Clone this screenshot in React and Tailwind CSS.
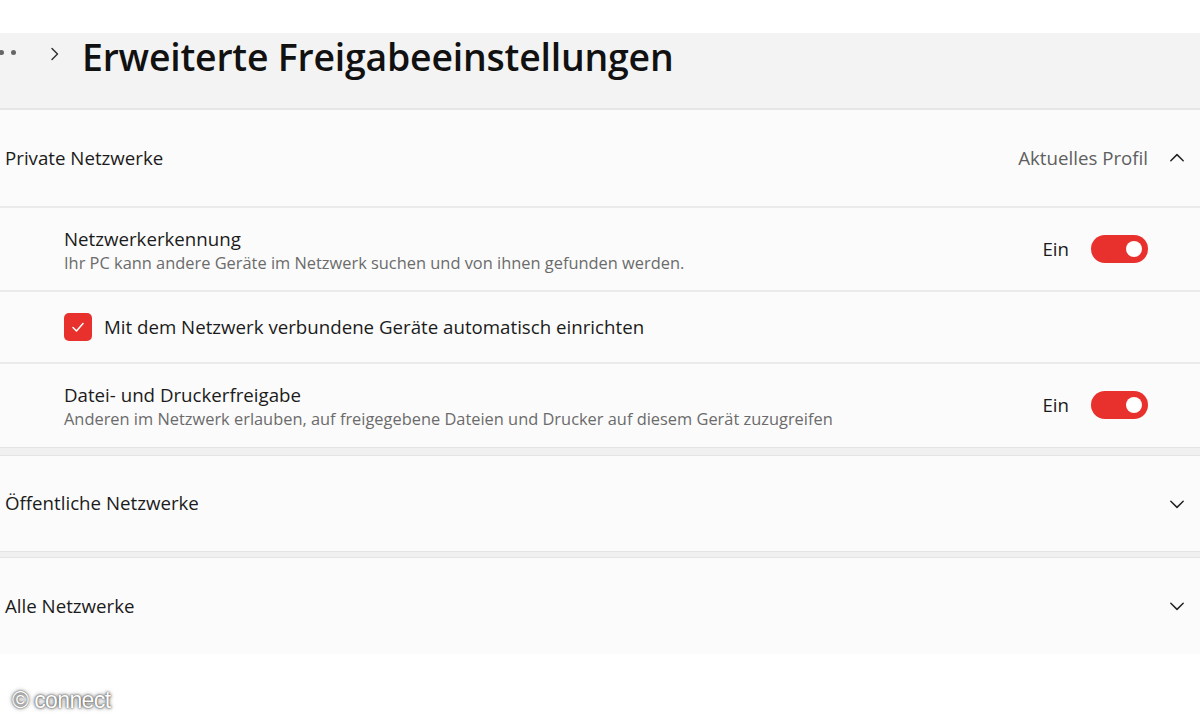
import React from "react";

const font = { fontFamily: '"Open Sans", "Noto Sans", sans-serif' };

function Chevron({ up }) {
  return (
    <svg width="18" height="18" viewBox="0 0 16 16" className="text-[#222]">
      <path
        d={up ? "M2.5 10.5 8 5l5.5 5.5" : "M2.5 5.5 8 11l5.5-5.5"}
        fill="none"
        stroke="currentColor"
        strokeWidth="1.3"
        strokeLinecap="round"
        strokeLinejoin="round"
      />
    </svg>
  );
}

function Toggle() {
  return (
    <div className="w-[57px] h-[28px] rounded-full bg-[#e8302d] flex items-center justify-end pr-[6px]">
      <div className="w-[16px] h-[16px] rounded-full bg-white" />
    </div>
  );
}

function Section({ title, right, open, children, height = "h-[96px]" }) {
  return (
    <div className="bg-[#fbfbfb]">
      <div className={`flex items-center ${height} pl-[5px] pr-[14px]`}>
        <span className="text-[18.7px] text-[#1b1b1b]">{title}</span>
        <div className="ml-auto flex items-center gap-[20px]">
          {right && <span className="text-[18.7px] text-[#5f5f5f]">{right}</span>}
          <Chevron up={open} />
        </div>
      </div>
      {children}
    </div>
  );
}

function SettingRow({ title, desc, height = "h-[84px]" }) {
  return (
    <div className={`flex items-center ${height} pl-[64px] pr-[52px] border-t-2 border-[#ebebeb]`}>
      <div className="flex flex-col pt-[2px]">
        <span className="text-[18.7px] leading-[24px] text-[#1b1b1b]">{title}</span>
        <span className="text-[16.4px] leading-[23px] text-[#6b6b6b]">{desc}</span>
      </div>
      <div className="ml-auto flex items-center gap-[22px]">
        <span className="text-[18.7px] text-[#1b1b1b]">Ein</span>
        <Toggle />
      </div>
    </div>
  );
}

export default function App() {
  return (
    <div className="w-[1200px] h-[720px] bg-white relative overflow-hidden" style={font}>
      <div className="h-[33px]" />
      <div className="h-[75px] bg-[#f3f3f3] flex items-start pt-[2px]">
        <div className="flex items-center gap-[7px] mt-[15px] -ml-[1px]">
          <div className="w-[5px] h-[5px] rounded-full bg-[#666]" />
          <div className="w-[5px] h-[5px] rounded-full bg-[#666]" />
        </div>
        <svg width="14" height="18" viewBox="0 0 14 18" className="ml-[32px] mt-[10px] text-[#333]">
          <path d="M4 3.5 9.5 9 4 14.5" fill="none" stroke="currentColor" strokeWidth="1.5" strokeLinecap="round" strokeLinejoin="round" />
        </svg>
        <h1 className="ml-[20px] text-[37.4px] leading-[44px] font-semibold text-[#111] tracking-[-0.2px]">
          Erweiterte Freigabeeinstellungen
        </h1>
      </div>
      <div className="border-t-2 border-[#e6e6e6]">
        <Section title="Private Netzwerke" right="Aktuelles Profil" open>
          <SettingRow
            title="Netzwerkerkennung"
            desc="Ihr PC kann andere Geräte im Netzwerk suchen und von ihnen gefunden werden."
          />
          <div className="flex items-center h-[72px] pl-[64px] border-t-2 border-[#ebebeb]">
            <div className="w-[28px] h-[28px] rounded-[5px] bg-[#e8302d] flex items-center justify-center">
              <svg width="16" height="16" viewBox="0 0 16 16">
                <path d="M3 8.5 6.5 12 13 4.5" fill="none" stroke="white" strokeWidth="1.5" strokeLinecap="round" strokeLinejoin="round" />
              </svg>
            </div>
            <span className="ml-[12px] text-[18.7px] text-[#1b1b1b]">
              Mit dem Netzwerk verbundene Geräte automatisch einrichten
            </span>
          </div>
          <SettingRow
            title="Datei- und Druckerfreigabe"
            desc="Anderen im Netzwerk erlauben, auf freigegebene Dateien und Drucker auf diesem Gerät zuzugreifen"
            height="h-[85px]"
          />
        </Section>
      </div>
      <div className="h-[9px] bg-[#f0f0f0] border-y border-[#e4e4e4]" />
      <Section title="Öffentliche Netzwerke" height="h-[95px]" />
      <div className="h-[7px] bg-[#f0f0f0] border-y border-[#e4e4e4]" />
      <Section title="Alle Netzwerke" height="h-[96px]" />
      <div
        className="absolute left-[12px] top-[683px] text-white text-[23px] tracking-[-0.6px] [text-shadow:0_0_2px_#333,0_0_4px_#555]"
        style={{ fontFamily: '"Liberation Sans", Arial, sans-serif' }}
      >
        © connect
      </div>
    </div>
  );
}
